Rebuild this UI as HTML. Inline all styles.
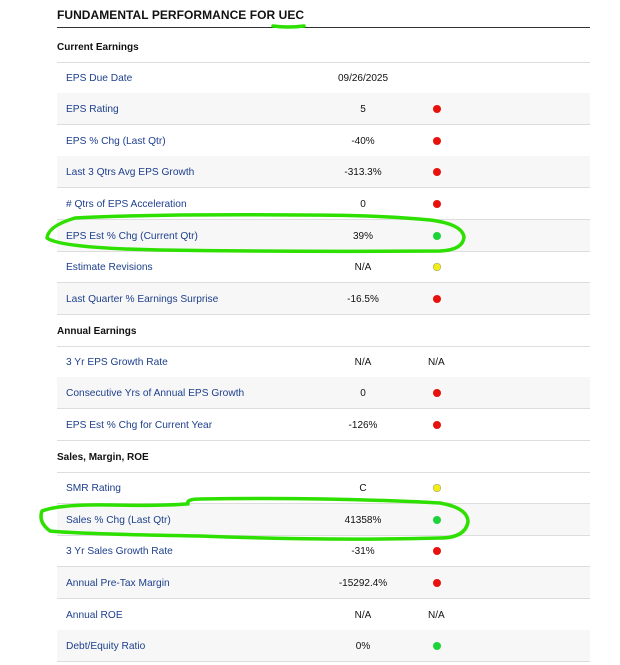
<!DOCTYPE html>
<html><head><meta charset="utf-8"><style>
body{margin:0;background:#fff;font-family:"Liberation Sans",sans-serif;width:620px;height:665px;position:relative;overflow:hidden}
.h{position:absolute;left:57px;top:8px;font-size:12px;font-weight:bold;color:#111;letter-spacing:0.05px}
.hl{position:absolute;left:57px;top:27px;width:533px;height:1px;background:#333}
.r{position:absolute;left:57px;width:533px;height:31px;border-bottom:1px solid #ddd;font-size:10.2px}
.r.g{background:#f7f7f7}
.r .l{position:absolute;left:9px;top:11px;color:#1d3f8c}
.r.s .l{left:0;color:#111;font-weight:bold;font-size:10px}
.r .v{position:absolute;left:256px;width:100px;text-align:center;top:11px;color:#111;font-size:10px}
.r .d{position:absolute;left:376px;top:12px;width:8px;height:8px;border-radius:50%}
.r .n{position:absolute;left:371px;top:11px;font-size:10px;color:#111}
.red{background:#e8120c}.grn{background:#1ed33a;border:0}.yel{background:#f2ee12;box-shadow:0 0 0 0.5px #999 inset}
</style></head><body>
<div class="h">FUNDAMENTAL PERFORMANCE FOR UEC</div>
<div class="hl"></div>
<div class="r s" style="top:31px"><span class="l">Current Earnings</span></div>
<div class="r" style="top:62px"><span class="l">EPS Due Date</span><span class="v">09/26/2025</span></div>
<div class="r g" style="top:93px"><span class="l">EPS Rating</span><span class="v">5</span><span class="d red"></span></div>
<div class="r" style="top:125px"><span class="l">EPS % Chg (Last Qtr)</span><span class="v">-40%</span><span class="d red"></span></div>
<div class="r g" style="top:156px"><span class="l">Last 3 Qtrs Avg EPS Growth</span><span class="v">-313.3%</span><span class="d red"></span></div>
<div class="r" style="top:188px"><span class="l"># Qtrs of EPS Acceleration</span><span class="v">0</span><span class="d red"></span></div>
<div class="r g" style="top:220px"><span class="l">EPS Est % Chg (Current Qtr)</span><span class="v">39%</span><span class="d grn"></span></div>
<div class="r" style="top:251px"><span class="l">Estimate Revisions</span><span class="v">N/A</span><span class="d yel"></span></div>
<div class="r g" style="top:283px"><span class="l">Last Quarter % Earnings Surprise</span><span class="v">-16.5%</span><span class="d red"></span></div>
<div class="r s" style="top:315px"><span class="l">Annual Earnings</span></div>
<div class="r" style="top:346px"><span class="l">3 Yr EPS Growth Rate</span><span class="v">N/A</span><span class="n">N/A</span></div>
<div class="r g" style="top:377px"><span class="l">Consecutive Yrs of Annual EPS Growth</span><span class="v">0</span><span class="d red"></span></div>
<div class="r" style="top:409px"><span class="l">EPS Est % Chg for Current Year</span><span class="v">-126%</span><span class="d red"></span></div>
<div class="r s" style="top:441px"><span class="l">Sales, Margin, ROE</span></div>
<div class="r" style="top:472px"><span class="l">SMR Rating</span><span class="v">C</span><span class="d yel"></span></div>
<div class="r g" style="top:504px"><span class="l">Sales % Chg (Last Qtr)</span><span class="v">41358%</span><span class="d grn"></span></div>
<div class="r" style="top:535px"><span class="l">3 Yr Sales Growth Rate</span><span class="v">-31%</span><span class="d red"></span></div>
<div class="r g" style="top:567px"><span class="l">Annual Pre-Tax Margin</span><span class="v">-15292.4%</span><span class="d red"></span></div>
<div class="r" style="top:599px"><span class="l">Annual ROE</span><span class="v">N/A</span><span class="n">N/A</span></div>
<div class="r g" style="top:630px"><span class="l">Debt/Equity Ratio</span><span class="v">0%</span><span class="d grn"></span></div>
<svg style="position:absolute;left:0;top:0" width="620" height="665" fill="none" stroke="#2ee000" stroke-width="3.5" stroke-linecap="round" stroke-linejoin="round">
<path d="M273 26 Q288 28 304 26"/>
<path d="M75 218 Q150 214 300 215 Q380 215 430 220 Q462 224 464 237 Q463 250 440 251 Q300 252 160 250 Q60 248 47 238 Q48 226 75 218"/>
<path d="M188 504 Q186 499 200 499 Q330 497 440 503 Q468 508 468 522 Q465 538 440 538 Q330 541 200 536 Q80 534 50 531 Q38 522 42 511 Q60 504 110 505 Q160 506 186 504"/>
</svg>
</body></html>
